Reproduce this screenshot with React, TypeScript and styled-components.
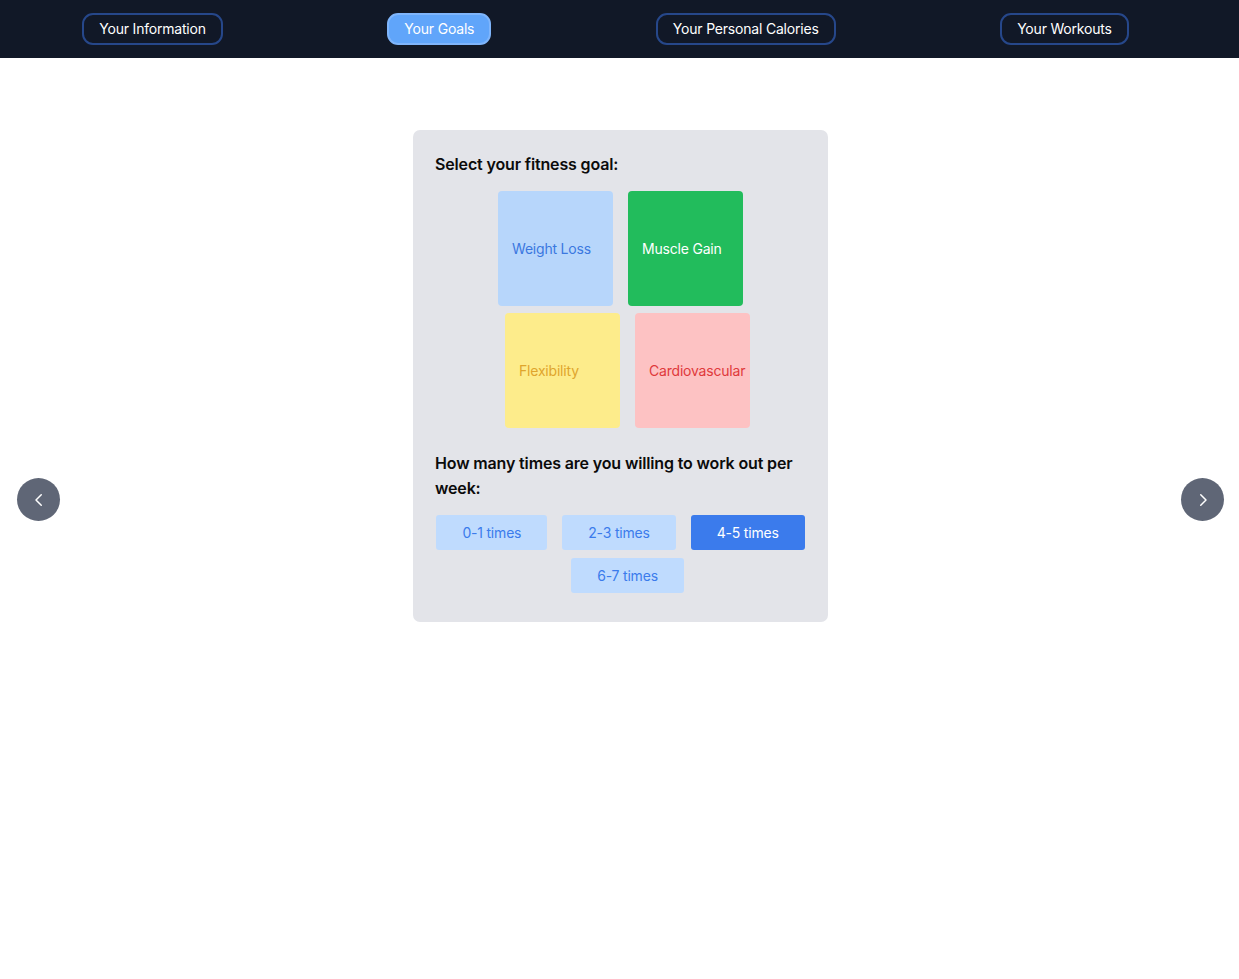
import React, { useState } from "react";
import styled, { createGlobalStyle } from "styled-components";

const Global = createGlobalStyle`
  html, body { margin: 0; padding: 0; background: #ffffff; }
  body { font-family: Inter, "Noto Sans", sans-serif; -webkit-font-smoothing: antialiased; }
  * { box-sizing: border-box; }
`;

const Page = styled.div`
  position: relative;
  min-height: 979px;
  background: #ffffff;
`;

const Header = styled.header`
  height: 58px;
  background: #111827;
  display: flex;
  align-items: center;
  justify-content: space-around;
  padding-right: 28px;
`;

const NavButton = styled.button<{ $active?: boolean }>`
  font-family: inherit;
  font-size: 14px;
  line-height: 20px;
  letter-spacing: -0.2px;
  color: #ffffff;
  height: 32px;
  padding: 0 15px;
  border-radius: 11px;
  border: 2px solid ${(p) => (p.$active ? "#7fb5fb" : "#26478a")};
  background: ${(p) => (p.$active ? "#60a5fa" : "transparent")};
  cursor: pointer;
`;

const Main = styled.main`
  display: flex;
  justify-content: center;
  padding: 72px 0 0 2px;
`;

const Card = styled.section`
  width: 415px;
  background: #e3e4e9;
  border-radius: 7px;
  padding: 24px 22px 29px;
`;

const Heading = styled.h2`
  margin: 0;
  font-size: 16px;
  line-height: 20px;
  font-weight: 600;
  color: #0b0b0b;
  letter-spacing: -0.15px;
`;

const TileRow = styled.div<{ $shift?: number }>`
  display: flex;
  justify-content: center;
  gap: 15px;
  padding-left: ${(p) => (p.$shift ? p.$shift * 2 : 0)}px;
`;

const TileGrid = styled.div`
  display: flex;
  flex-direction: column;
  gap: 7px;
  margin-top: 17px;
`;

const Tile = styled.button<{ $bg: string; $fg: string }>`
  width: 115px;
  height: 115px;
  border: none;
  border-radius: 4px;
  background: ${(p) => p.$bg};
  color: ${(p) => p.$fg};
  font-family: inherit;
  font-size: 14px;
  letter-spacing: -0.2px;
  text-align: left;
  padding: 0 0 0 14px;
  display: flex;
  align-items: center;
  white-space: nowrap;
  cursor: pointer;
`;

const Question = styled.h2`
  margin: 23px 0 0;
  font-size: 16px;
  line-height: 25px;
  font-weight: 600;
  color: #0b0b0b;
  letter-spacing: -0.15px;
`;

const FreqGrid = styled.div`
  display: flex;
  flex-direction: column;
  gap: 8px;
  margin-top: 14px;
`;

const FreqRow = styled.div<{ $shift?: number }>`
  display: flex;
  justify-content: center;
  gap: 15px;
  padding-left: ${(p) => (p.$shift ? p.$shift * 2 : 0)}px;
`;

const FreqButton = styled.button<{ $active?: boolean }>`
  height: 35px;
  padding: 0 26px;
  border: none;
  border-radius: 3px;
  font-family: inherit;
  font-size: 14px;
  letter-spacing: -0.2px;
  background: ${(p) => (p.$active ? "#3b7bec" : "#bfdbfe")};
  color: ${(p) => (p.$active ? "#ffffff" : "#3b7bec")};
  cursor: pointer;
`;

const Arrow = styled.button<{ $side: "left" | "right" }>`
  position: absolute;
  top: 478px;
  ${(p) => (p.$side === "left" ? "left: 17px;" : "right: 15px;")}
  width: 43px;
  height: 43px;
  border-radius: 50%;
  border: none;
  background: #5f6676;
  display: flex;
  align-items: center;
  justify-content: center;
  padding: 0;
  cursor: pointer;
`;

const Chevron = ({ dir }: { dir: "left" | "right" }) => (
  <svg width="18" height="18" viewBox="0 0 24 24" fill="none" stroke="#ffffff" strokeWidth="2" strokeLinecap="round" strokeLinejoin="round">
    {dir === "left" ? <path d="M15 5l-7 7 7 7" /> : <path d="M9 5l7 7-7 7" />}
  </svg>
);

const goalsTop = [
  { label: "Weight Loss", bg: "#b7d6fb", fg: "#3b78e0" },
  { label: "Muscle Gain", bg: "#22bc5c", fg: "#ffffff" },
];
const goalsBottom = [
  { label: "Flexibility", bg: "#fdec8b", fg: "#dfa52d" },
  { label: "Cardiovascular", bg: "#fdc2c3", fg: "#e0393b" },
];

export default function App() {
  const [goal, setGoal] = useState("Muscle Gain");
  const [freq, setFreq] = useState("4-5 times");
  const navs = ["Your Information", "Your Goals", "Your Personal Calories", "Your Workouts"];
  return (
    <Page>
      <Global />
      <Header>
        {navs.map((n) => (
          <NavButton key={n} $active={n === "Your Goals"}>
            {n}
          </NavButton>
        ))}
      </Header>
      <Main>
        <Card>
          <Heading>Select your fitness goal:</Heading>
          <TileGrid>
            <TileRow>
              {goalsTop.map((g) => (
                <Tile key={g.label} $bg={g.bg} $fg={g.fg} onClick={() => setGoal(g.label)} aria-pressed={goal === g.label}>
                  {g.label}
                </Tile>
              ))}
            </TileRow>
            <TileRow $shift={7}>
              {goalsBottom.map((g) => (
                <Tile key={g.label} $bg={g.bg} $fg={g.fg} onClick={() => setGoal(g.label)} aria-pressed={goal === g.label}>
                  {g.label}
                </Tile>
              ))}
            </TileRow>
          </TileGrid>
          <Question>How many times are you willing to work out per week:</Question>
          <FreqGrid>
            <FreqRow>
              {["0-1 times", "2-3 times", "4-5 times"].map((f) => (
                <FreqButton key={f} $active={freq === f} onClick={() => setFreq(f)}>
                  {f}
                </FreqButton>
              ))}
            </FreqRow>
            <FreqRow $shift={7}>
              {["6-7 times"].map((f) => (
                <FreqButton key={f} $active={freq === f} onClick={() => setFreq(f)}>
                  {f}
                </FreqButton>
              ))}
            </FreqRow>
          </FreqGrid>
        </Card>
      </Main>
      <Arrow $side="left" aria-label="Previous">
        <Chevron dir="left" />
      </Arrow>
      <Arrow $side="right" aria-label="Next">
        <Chevron dir="right" />
      </Arrow>
    </Page>
  );
}
